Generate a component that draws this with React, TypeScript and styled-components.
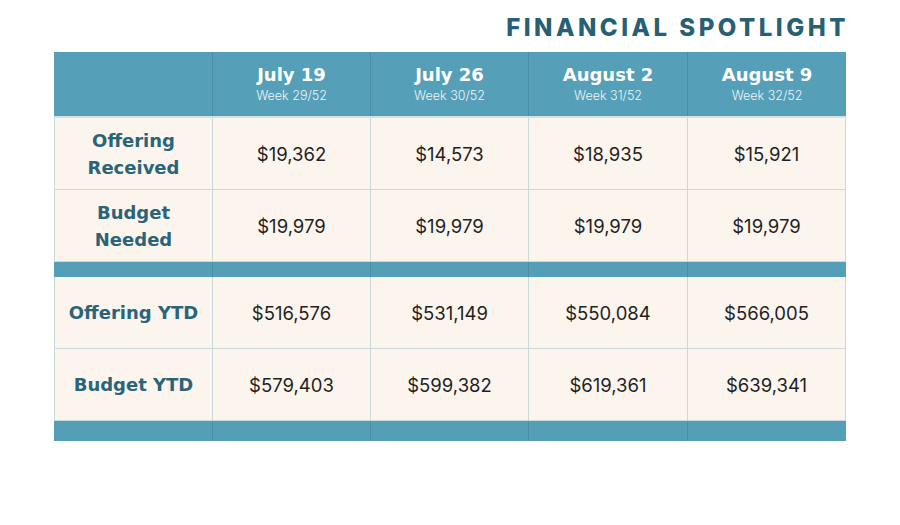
import styled, { createGlobalStyle } from "styled-components";

interface Week {
  date: string;
  week: string;
}

interface DataRow {
  label: string[];
  values: string[];
}

const weeks: Week[] = [
  { date: "July 19", week: "Week 29/52" },
  { date: "July 26", week: "Week 30/52" },
  { date: "August 2", week: "Week 31/52" },
  { date: "August 9", week: "Week 32/52" },
];

const weekly: DataRow[] = [
  { label: ["Offering", "Received"], values: ["$19,362", "$14,573", "$18,935", "$15,921"] },
  { label: ["Budget", "Needed"], values: ["$19,979", "$19,979", "$19,979", "$19,979"] },
];

const ytd: DataRow[] = [
  { label: ["Offering YTD"], values: ["$516,576", "$531,149", "$550,084", "$566,005"] },
  { label: ["Budget YTD"], values: ["$579,403", "$599,382", "$619,361", "$639,341"] },
];

const boldFont = `"DejaVu Sans", "Inter", sans-serif`;

const GlobalStyle = createGlobalStyle`
  html, body {
    margin: 0;
    padding: 0;
    background: #ffffff;
  }
  body {
    font-family: "Inter", "Liberation Sans", sans-serif;
  }
`;

export default function App() {
  const renderRows = (rows: DataRow[]) =>
    rows.map((row) => (
      <Row key={row.label.join(" ")}>
        <LabelCell>
          {row.label.map((line) => (
            <LabelLine key={line}>{line}</LabelLine>
          ))}
        </LabelCell>
        {row.values.map((v, i) => (
          <ValueCell key={i}>{v}</ValueCell>
        ))}
      </Row>
    ));

  return (
    <>
      <GlobalStyle />
      <Page>
        <Title>FINANCIAL SPOTLIGHT</Title>
        <Table>
          <HeaderRow>
            <HeaderCell />
            {weeks.map((w) => (
              <HeaderCell key={w.date}>
                <HeaderDate>{w.date}</HeaderDate>
                <HeaderWeek>{w.week}</HeaderWeek>
              </HeaderCell>
            ))}
          </HeaderRow>
          {renderRows(weekly)}
          <BarRow height={15}>
            {Array.from({ length: 5 }).map((_, i) => (
              <BarCell key={i} />
            ))}
          </BarRow>
          {renderRows(ytd)}
          <BarRow height={20}>
            {Array.from({ length: 5 }).map((_, i) => (
              <BarCell key={i} />
            ))}
          </BarRow>
        </Table>
      </Page>
    </>
  );
}

const Page = styled.div`
  width: 900px;
  height: 525px;
  box-sizing: border-box;
  padding: 14px 54px 0 54px;
  display: flex;
  flex-direction: column;
  align-items: stretch;
`;

const Title = styled.h1`
  margin: 0;
  height: 38px;
  text-align: right;
  font-family: "Inter", "Liberation Sans", sans-serif;
  font-weight: 800;
  font-size: 24px;
  line-height: 28px;
  letter-spacing: 3.5px;
  margin-right: -3px;
  color: #275f74;
`;

const Table = styled.div`
  width: 792px;
  display: flex;
  flex-direction: column;
`;

const Row = styled.div`
  display: grid;
  grid-template-columns: 158px 158px 158px 159px 159px;
  height: 72px;
  background: #fcf5ee;
`;

const HeaderRow = styled(Row)`
  height: 66px;
  background: #559fb8;
  border-bottom: 2px solid #cfe2e6;
  box-sizing: border-box;
`;

const HeaderCell = styled.div`
  display: flex;
  flex-direction: column;
  align-items: center;
  justify-content: center;
  color: #ffffff;

  & + & {
    border-left: 1px solid #4a8fa6;
  }
`;

const HeaderDate = styled.div`
  font-family: ${boldFont};
  font-weight: 700;
  font-size: 18px;
  line-height: 22px;
`;

const HeaderWeek = styled.div`
  margin-top: 2px;
  font-weight: 300;
  font-size: 12.5px;
  line-height: 16px;
  color: #eef6f8;
`;

const Cell = styled.div`
  display: flex;
  flex-direction: column;
  align-items: center;
  justify-content: center;
  border-bottom: 1px solid #c9d9db;
  border-left: 1px solid #c9d9db;
  box-sizing: border-box;

  &:last-child {
    border-right: 1px solid #c9d9db;
  }
`;

const LabelCell = styled(Cell)`
  font-family: ${boldFont};
  color: #2a6479;
  font-weight: 700;
  font-size: 18px;
  line-height: 27px;
`;

const LabelLine = styled.span`
  display: block;
  text-align: center;
`;

const ValueCell = styled(Cell)`
  color: #1f1f1f;
  font-weight: 400;
  font-size: 18.5px;
`;

const BarRow = styled.div<{ height: number }>`
  display: grid;
  grid-template-columns: 158px 158px 158px 159px 159px;
  height: ${({ height }) => height}px;
  background: #549eb7;
`;

const BarCell = styled.div`
  & + & {
    border-left: 1px solid #4a8fa6;
  }
`;
